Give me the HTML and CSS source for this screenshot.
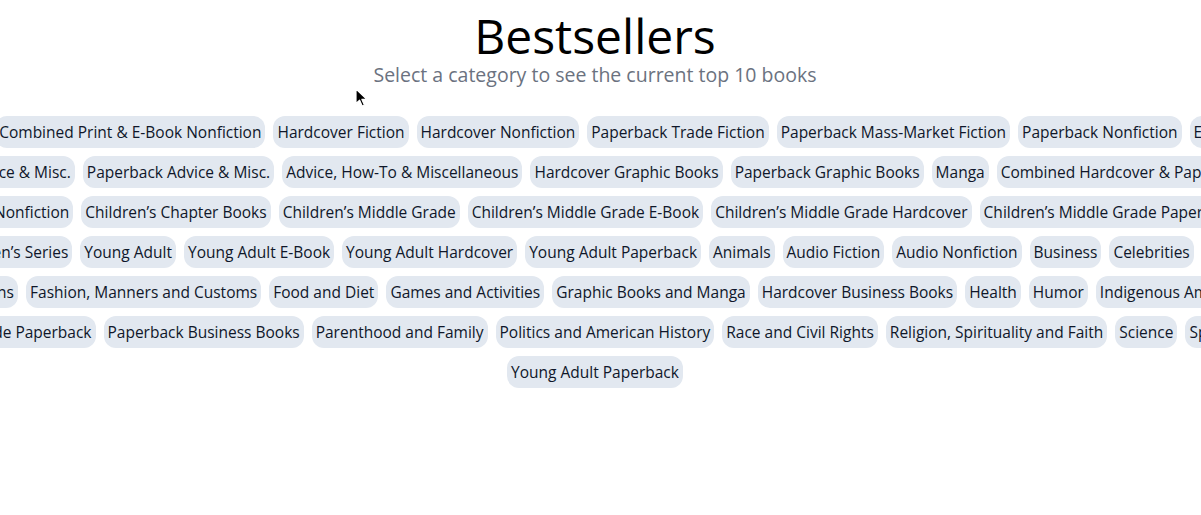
FILE: index.html
```html
<!DOCTYPE html>
<html lang="en">
<head>
<meta charset="utf-8">
<title>Bestsellers</title>
<link rel="stylesheet" href="styles.css">
</head>
<body>
<main class="page">
  <header class="intro">
    <h1 class="title">Bestsellers</h1>
    <p class="subtitle">Select a category to see the current top 10 books</p>
  </header>
  <nav class="categories">
    <div class="row">
      <button class="pill">Combined Print &amp; E-Book Fiction</button>
      <button class="pill">Combined Print &amp; E-Book Nonfiction</button>
      <button class="pill">Hardcover Fiction</button>
      <button class="pill">Hardcover Nonfiction</button>
      <button class="pill">Paperback Trade Fiction</button>
      <button class="pill">Paperback Mass-Market Fiction</button>
      <button class="pill">Paperback Nonfiction</button>
      <button class="pill">E-Book Fiction</button>
      <button class="pill">E-Book Nonfiction</button>
    </div>
    <div class="row">
      <button class="pill">Hardcover Advice &amp; Misc.</button>
      <button class="pill">Paperback Advice &amp; Misc.</button>
      <button class="pill">Advice, How-To &amp; Miscellaneous</button>
      <button class="pill">Hardcover Graphic Books</button>
      <button class="pill">Paperback Graphic Books</button>
      <button class="pill">Manga</button>
      <button class="pill">Combined Hardcover &amp; Paperback Fiction</button>
    </div>
    <div class="row">
      <button class="pill">Combined Hardcover &amp; Paperback Nonfiction</button>
      <button class="pill">Children’s Chapter Books</button>
      <button class="pill">Children’s Middle Grade</button>
      <button class="pill">Children’s Middle Grade E-Book</button>
      <button class="pill">Children’s Middle Grade Hardcover</button>
      <button class="pill">Children’s Middle Grade Paperback</button>
      <button class="pill">Children’s Illustrated Books</button>
    </div>
    <div class="row">
      <button class="pill">Children’s Picture Books</button>
      <button class="pill">Children’s Series</button>
      <button class="pill">Young Adult</button>
      <button class="pill">Young Adult E-Book</button>
      <button class="pill">Young Adult Hardcover</button>
      <button class="pill">Young Adult Paperback</button>
      <button class="pill">Animals</button>
      <button class="pill">Audio Fiction</button>
      <button class="pill">Audio Nonfiction</button>
      <button class="pill">Business</button>
      <button class="pill">Celebrities</button>
      <button class="pill">Crime and Punishment</button>
      <button class="pill">Crafts</button>
    </div>
    <div class="row">
      <button class="pill">Expeditions</button>
      <button class="pill">Fashion, Manners and Customs</button>
      <button class="pill">Food and Diet</button>
      <button class="pill">Games and Activities</button>
      <button class="pill">Graphic Books and Manga</button>
      <button class="pill">Hardcover Business Books</button>
      <button class="pill">Health</button>
      <button class="pill">Humor</button>
      <button class="pill">Indigenous Americans</button>
    </div>
    <div class="row">
      <button class="pill">Relationship</button>
      <button class="pill">Middle Grade Paperback</button>
      <button class="pill">Paperback Business Books</button>
      <button class="pill">Parenthood and Family</button>
      <button class="pill">Politics and American History</button>
      <button class="pill">Race and Civil Rights</button>
      <button class="pill">Religion, Spirituality and Faith</button>
      <button class="pill">Science</button>
      <button class="pill">Sports and Fitness</button>
      <button class="pill">Travel</button>
    </div>
    <div class="row">
      <button class="pill">Young Adult Paperback</button>
    </div>
  </nav>
</main>
<svg class="cursor" width="14" height="20" viewBox="0 0 14 20" aria-hidden="true">
  <path d="M1 1 L1 15.5 L4.6 12.2 L7.2 18 L9.4 17 L6.9 11.4 L11.8 11.4 Z" fill="#000" stroke="#fff" stroke-width="1.2" stroke-linejoin="round"/>
</svg>
</body>
</html>
```
FILE: styles.css
```css
html, body {
  margin: 0;
  padding: 0;
  background: #ffffff;
}

body {
  font-family: "Open Sans", "Noto Sans", sans-serif;
  color: #0f172a;
  overflow: hidden;
  position: relative;
  height: 515px;
}

.page {
  padding: 12px 11px 0 0;
  display: flex;
  flex-direction: column;
  align-items: center;
}

.intro {
  display: flex;
  flex-direction: column;
  align-items: center;
}

.title {
  margin: 0;
  font-size: 48px;
  line-height: 48px;
  font-weight: 400;
  color: #000000;
}

.subtitle {
  margin: 1px 0 0;
  font-size: 19.5px;
  line-height: 28px;
  color: #6b7280;
}

.categories {
  margin-top: 27px;
  display: flex;
  flex-direction: column;
  gap: 8px;
  width: 100%;
}

.row {
  display: flex;
  justify-content: center;
  gap: 8px;
  white-space: nowrap;
}

.pill {
  flex: none;
  border: 0;
  margin: 0;
  padding: 4px;
  border-radius: 12px;
  background: #e2e8f0;
  color: #0f172a;
  font-family: inherit;
  font-size: 15.5px;
  line-height: 24px;
  cursor: pointer;
}

.cursor {
  position: absolute;
  left: 355px;
  top: 88px;
}
```
